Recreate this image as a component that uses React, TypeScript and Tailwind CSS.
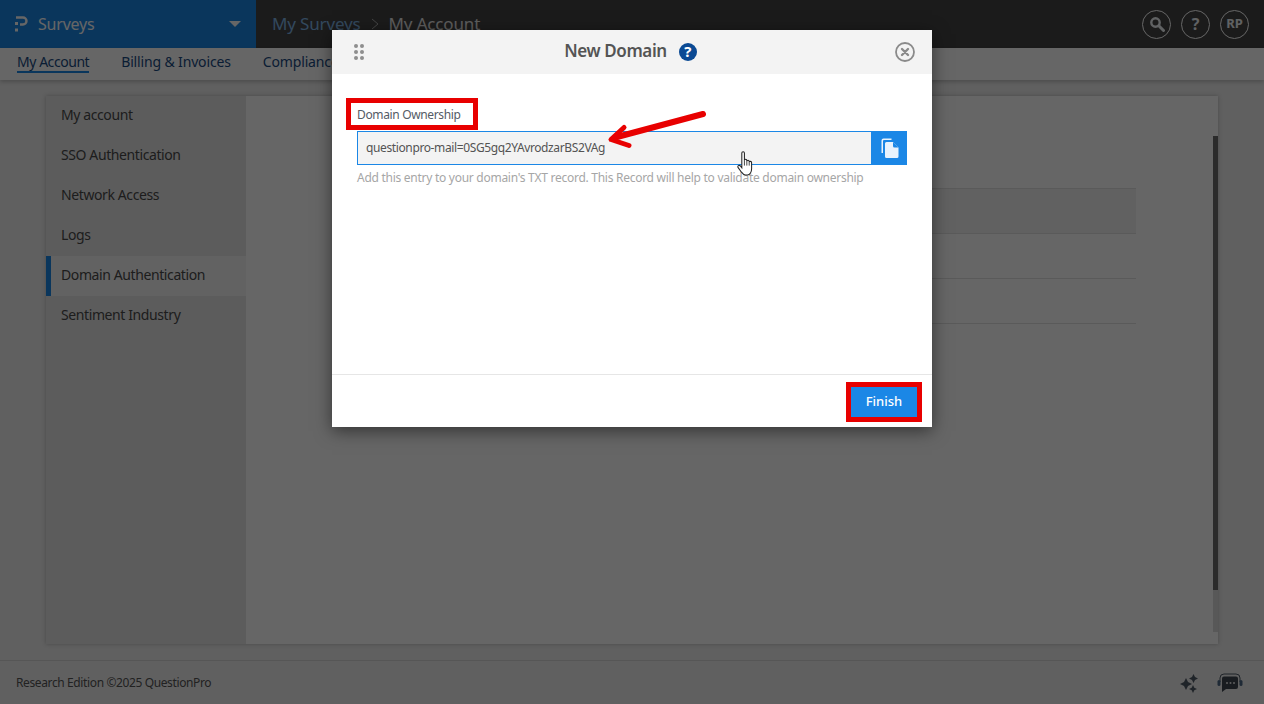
import React from "react";

const font = { fontFamily: '"Noto Sans", "Open Sans", Arial, sans-serif' };

function Circle({ children }: { children: React.ReactNode }) {
  return (
    <div className="flex h-[29px] w-[29px] items-center justify-center rounded-full border border-[#ffffff] text-[13px] font-bold text-[#f0f4f8]">
      {children}
    </div>
  );
}

const menu = ["My account", "SSO Authentication", "Network Access", "Logs", "Domain Authentication", "Sentiment Industry"];

export default function App() {
  return (
    <div className="relative flex h-[704px] w-[1264px] flex-col overflow-hidden bg-[#efefef]" style={font}>
      <header className="flex h-12 shrink-0 bg-[#444444]">
        <div className="flex h-12 w-64 items-center bg-[#1b87e6] pl-[15px] pr-[15px] text-white">
          <svg width="13" height="16" viewBox="0 0 13 16" fill="none" className="mr-[10px]">
            <path d="M1 1.500h7a3.500 3.500 0 0 1 0 7H5" stroke="#fff" strokeWidth="2.400" />
            <rect x="0" y="12.500" width="3" height="3" fill="#fff" />
            <rect x="0" y="6" width="3" height="3" fill="#fff" />
          </svg>
          <span className="text-[16px] tracking-[-0.2px]">Surveys</span>
          <span className="ml-auto h-0 w-0 border-x-[6px] border-t-[6px] border-x-transparent border-t-white" />
        </div>
        <div className="flex items-center pl-4 text-[17px] tracking-[-0.15px] text-white">
          <span className="text-[#7fb5e6]">My Surveys</span>
          <svg width="10" height="12" viewBox="0 0 10 12" fill="none" stroke="#aaaaaa" className="mx-[9px]">
            <path d="M2 1l6 5-6 5" />
          </svg>
          <span className="text-[#e8e8e8]">My Account</span>
        </div>
        <div className="ml-auto flex items-center gap-[10px] pr-[15px]">
          <Circle>
            <svg width="16" height="16" viewBox="0 0 16 16" fill="none" stroke="#f0f4f8" strokeWidth="2.400">
              <circle cx="6.500" cy="6.500" r="4.200" />
              <path d="M9.800 9.800 14.500 14.500" strokeLinecap="round" strokeWidth="3" />
            </svg>
          </Circle>
          <Circle>
            <span className="text-[16px] leading-none">?</span>
          </Circle>
          <Circle>RP</Circle>
        </div>
      </header>

      <nav className="z-10 flex h-8 shrink-0 items-start gap-8 bg-white pl-[17px] pt-[4px] text-[14px] tracking-[-0.15px] text-[#1a4a82] shadow-[0_2px_4px_rgba(0,0,0,0.2)]">
        <span className="border-b-2 border-[#1b87e6] leading-[19px] tracking-[-0.45px]">My Account</span>
        <span className="leading-[19px]">Billing &amp; Invoices</span>
        <span className="leading-[19px]">Compliance</span>
      </nav>

      <main className="flex-1 px-[46px] pb-4 pt-4">
        <div className="flex h-[548px] w-[1172px] bg-white shadow-[0_0_4px_rgba(0,0,0,0.25)]">
          <aside className="w-[200px] shrink-0 bg-[#e6e6e6] text-[14px] tracking-[-0.4px] text-[#4a4a4a]">
            {menu.map((m, i) => (
              <div
                key={m}
                className={
                  i === 4
                    ? "flex h-10 items-center border-l-[5px] border-[#1b87e6] bg-[#f5f5f5] pb-[4px] pl-[10px]"
                    : "flex h-10 items-center pb-[4px] pl-[15px]"
                }
              >
                {m}
              </div>
            ))}
          </aside>
          <section className="flex flex-1 justify-between">
            <div className="ml-[90px] mt-[92px] w-[800px]">
              <div className="h-[46px] border-y border-[#e2e2e2] bg-[#f3f3f3]" />
              <div className="h-[45px] border-b border-[#e2e2e2]" />
              <div className="h-[45px] border-b border-[#e2e2e2]" />
            </div>
            <div className="mb-3 mt-10 flex w-[5px] flex-col">
              <div className="h-[454px] bg-[#6c6c6c]" />
              <div className="flex-1 bg-[#dcdcdc]" />
            </div>
          </section>
        </div>
      </main>

      <footer className="flex h-11 shrink-0 items-center justify-between border-t border-[#d8d8d8] bg-[#efefef] pl-4 pr-[21px] text-[12px] tracking-[-0.38px] text-[#555555]">
        <span>Research Edition ©2025 QuestionPro</span>
        <div className="flex items-center gap-[18px]">
          <svg width="20" height="20" viewBox="0 0 20 20" fill="#4f5a66">
            <path d="M7 5 9 9l4 2-4 2-2 4-2-4-4-2 4-2z" />
            <path d="M14.500 1 16 4l3 1.500-3 1.500-1.500 3-1.500-3-3-1.500 3-1.500z" />
            <path d="M14 12l1.300 2.700L18 16l-2.700 1.300L14 20l-1.300-2.700L10 16l2.700-1.300z" />
          </svg>
          <svg width="26" height="20" viewBox="0 0 26 20" fill="none">
            <path d="M3 9V5a4 4 0 0 1 4-4h12a4 4 0 0 1 4 4v4" stroke="#4f5a66" strokeWidth="1" />
            <rect x="0.500" y="7" width="3" height="6" rx="1.500" fill="#4f6a88" />
            <rect x="22.500" y="7" width="3" height="6" rx="1.500" fill="#4f6a88" />
            <path d="M7 3.500h12a2 2 0 0 1 2 2V14a2 2 0 0 1-2 2H9l-4 3V5.500a2 2 0 0 1 2-2z" fill="#3f4852" />
            <circle cx="10" cy="10" r="1" fill="#e8e8e8" />
            <circle cx="13.500" cy="10" r="1" fill="#e8e8e8" />
            <circle cx="17" cy="10" r="1" fill="#e8e8e8" />
          </svg>
        </div>
      </footer>

      {/* backdrop */}
      <div className="absolute inset-0 z-20 bg-black/60" />

      {/* modal */}
      <div className="absolute left-[332px] top-[30px] z-30 flex h-[397px] w-[600px] flex-col bg-white shadow-[0_4px_16px_rgba(0,0,0,0.5)]">
        <div className="relative flex h-11 shrink-0 items-center justify-between bg-[#f3f3f3] pl-[22px] pr-[17px]">
          <svg width="10" height="16" viewBox="0 0 10 16" fill="#8e8e8e">
            {[2, 8, 14].map((y) => (
              <React.Fragment key={y}>
                <circle cx="2" cy={y} r="2" />
                <circle cx="8" cy={y} r="2" />
              </React.Fragment>
            ))}
          </svg>
          <div className="flex items-center gap-3 pb-[1px] pl-[2px] text-[17px] font-semibold text-[#545454]">
            <span className="pb-[2px] tracking-[-0.38px]">New Domain</span>
            <span className="flex h-[18px] w-[18px] items-center justify-center rounded-full bg-[#0b4a94] text-[15px] font-bold leading-none text-white">
              ?
            </span>
          </div>
          <svg width="20" height="20" viewBox="0 0 20 20" fill="none" stroke="#8a8a8a">
            <circle cx="10" cy="10" r="9" strokeWidth="1.800" />
            <path d="M7 7l6 6M13 7l-6 6" strokeWidth="2.400" strokeLinecap="round" />
          </svg>
        </div>

        <div className="flex-1 pl-[25px] pr-[25px] pt-[33px]">
          <div className="relative h-[16px] text-[12px] leading-[16px] tracking-[-0.35px] text-[#545b66]">
            Domain Ownership
            <span className="absolute left-[-11px] top-[-9px] h-8 w-[132px] border-[5px] border-[#e80000]" />
          </div>
          <div className="mt-[8px] flex h-[34px] w-[550px]">
            <div className="flex flex-1 items-center border border-[#1b87e6] bg-[#f3f3f3] pl-2 text-[12px] tracking-[-0.38px] text-[#545454]">
              questionpro-mail=0SG5gq2YAvrodzarBS2VAg
            </div>
            <div className="flex w-[35px] items-center justify-center bg-[#1b87e6]">
              <svg width="18" height="21" viewBox="0 0 18 21" fill="#e8f3fd">
                <path d="M2.500 0.500h8v1.500H3a1 1 0 0 0-1 1V15H0.500V2.500a2 2 0 0 1 2-2z" />
                <path d="M5.500 4H12l5.500 5.500v9a1.500 1.500 0 0 1-1.500 1.500H5.500A1.500 1.500 0 0 1 4 18.500v-13A1.500 1.500 0 0 1 5.500 4z" />
                <path d="M12 4v4a1.500 1.500 0 0 0 1.500 1.500h4z" fill="#1b87e6" />
              </svg>
            </div>
          </div>
          <p className="mt-[5px] text-[12px] leading-[16px] tracking-[-0.27px] text-[#a6a6a6]">
            Add this entry to your domain's TXT record. This Record will help to validate domain ownership
          </p>
        </div>

        <div className="flex h-[53px] shrink-0 items-start justify-end border-t border-[#e6e6e6] pr-[15px] pt-[12px]">
          <button className="relative h-[30px] w-[66px] bg-[#1b87e6] pb-[1px] text-[13px] font-medium text-white">
            Finish
            <span className="absolute left-[-5px] top-[-5px] h-10 w-[76px] border-[5px] border-[#e80000]" />
          </button>
        </div>
      </div>

      {/* arrow annotation */}
      <svg className="absolute left-[600px] top-[105px] z-40" width="112" height="45" viewBox="0 0 112 45" fill="none">
        <path d="M103 9 17 32" stroke="#e80000" strokeWidth="6" strokeLinecap="round" />
        <path d="M24 22.500 11 34.500l18 6" stroke="#e80000" strokeWidth="5" strokeLinecap="round" strokeLinejoin="round" />
      </svg>

      {/* hand cursor */}
      <svg className="absolute left-[737px] top-[151px] z-40" width="19" height="25" viewBox="0 0 18 24">
        <path
          d="M4.500 2c0-1.800 2.500-1.800 2.500 0v7c0-1.500 2.300-1.500 2.300 0v1c0-1.500 2.300-1.500 2.300 0v1c0-1.400 2.300-1.400 2.300 0.200V17c0 3-1.500 6-4 6H8c-2 0-3-1.500-4.500-3.500L1 16c-1.200-1.600 1-3 2.300-1.500l1.200 1.500z"
          fill="#fff"
          stroke="#222"
          strokeWidth="1"
        />
        <path d="M7 9v5M9.300 10v4M11.600 11v3" stroke="#222" strokeWidth="0.800" />
      </svg>
    </div>
  );
}
